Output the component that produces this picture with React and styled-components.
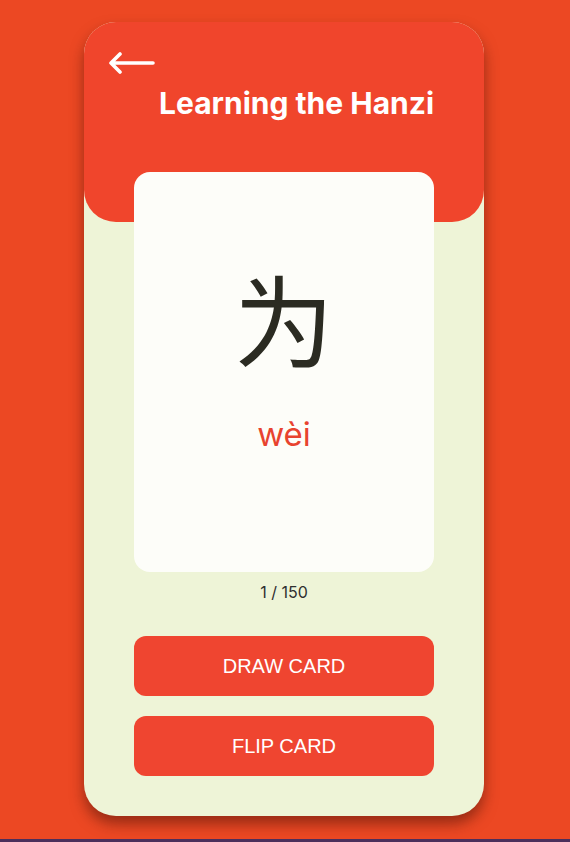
import React from 'react'
import styled, { createGlobalStyle } from 'styled-components'

const GlobalStyle = createGlobalStyle`
  html, body {
    margin: 0;
    padding: 0;
    background: #4b2f5c;
  }
  * {
    box-sizing: border-box;
  }
`

const Page = styled.div`
  height: 839px;
  background: #ec4823;
  padding: 22px 2px 0 0;
  display: flex;
  justify-content: center;
  font-family: Inter, 'Noto Sans', sans-serif;
`

const Phone = styled.div`
  width: 400px;
  height: 794px;
  background: #eef4d7;
  border-radius: 32px;
  box-shadow: 0 8px 14px rgba(80, 20, 10, 0.55);
  overflow: hidden;
  display: flex;
  flex-direction: column;
  align-items: center;
`

const Header = styled.header`
  width: 100%;
  height: 200px;
  background: #f0452c;
  border-radius: 0 0 32px 32px;
  padding: 30px 24px 0;
  display: flex;
  flex-direction: column;
`

const BackButton = styled.button`
  width: 48px;
  height: 22px;
  padding: 0;
  border: none;
  background: none;
  cursor: pointer;
  display: flex;
`

const Title = styled.h1`
  margin: 11px 0 0 51px;
  color: #fff;
  font-size: 30px;
  font-weight: 700;
  text-align: left;
`

const Card = styled.div`
  margin-top: -50px;
  width: 300px;
  height: 400px;
  background: #fdfdf9;
  border-radius: 16px;
  display: flex;
  flex-direction: column;
  align-items: center;
  padding-top: 95px;
`

const Hanzi = styled.div`
  font-family: 'Noto Sans CJK SC', sans-serif;
  font-size: 100px;
  line-height: 1;
  color: #2b2b22;
`

const Pinyin = styled.div`
  margin-top: 47px;
  font-family: Inter, 'Noto Sans', sans-serif;
  font-size: 33px;
  color: #e8432f;
`

const Counter = styled.div`
  margin-top: 10px;
  font-size: 16px;
  color: #2f2f2f;
`

const Actions = styled.div`
  margin-top: 34px;
  width: 300px;
  display: flex;
  flex-direction: column;
  gap: 20px;
`

const ActionButton = styled.button`
  height: 60px;
  border: none;
  border-radius: 12px;
  background: #ef4530;
  color: #fff;
  font-family: 'Liberation Sans', Arial, sans-serif;
  font-size: 20px;
  cursor: pointer;
`

const ArrowIcon = () => (
  <svg width="48" height="22" viewBox="0 0 48 22" fill="none">
    <path
      d="M45 11H4M12 2L3 11l9 9"
      stroke="#fff"
      strokeWidth="3.6"
      strokeLinecap="round"
      strokeLinejoin="round"
    />
  </svg>
)

const App = () => (
  <>
    <GlobalStyle />
    <Page>
      <Phone>
        <Header>
          <BackButton aria-label="Back">
            <ArrowIcon />
          </BackButton>
          <Title>Learning the Hanzi</Title>
        </Header>
        <Card>
          <Hanzi>为</Hanzi>
          <Pinyin>wèi</Pinyin>
        </Card>
        <Counter>1 / 150</Counter>
        <Actions>
          <ActionButton>DRAW CARD</ActionButton>
          <ActionButton>FLIP CARD</ActionButton>
        </Actions>
      </Phone>
    </Page>
  </>
)

export default App
